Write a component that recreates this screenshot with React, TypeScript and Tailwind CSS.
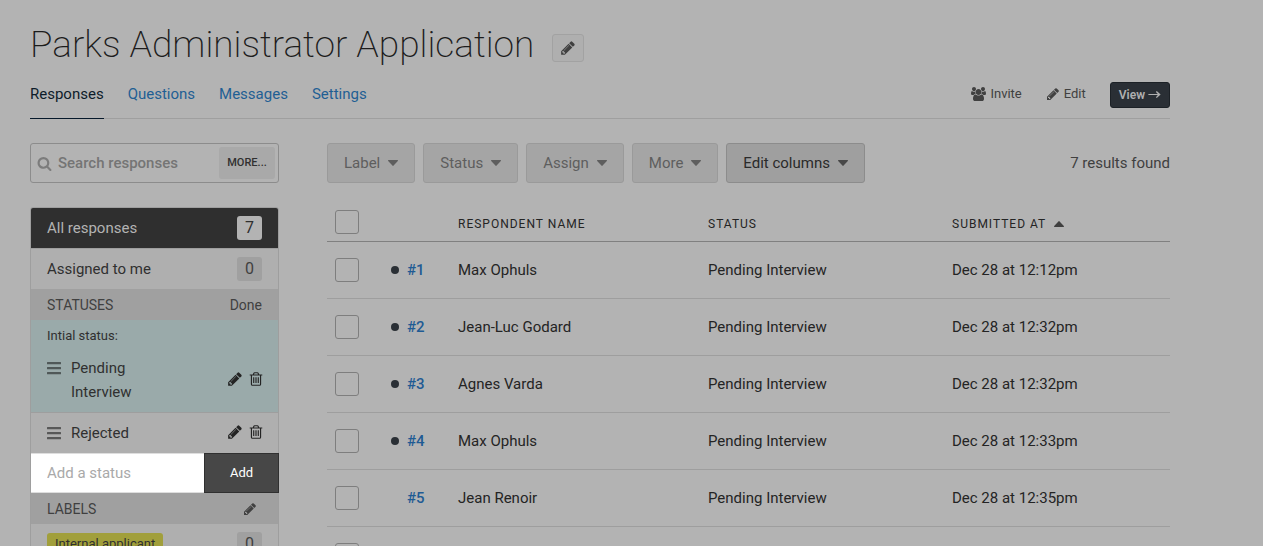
import React from "react";

const ICONS = {
  pencil: {
    box: "0 0 1792 1792",
    d: "M491 1536l91-91-235-235-91 91v107h128v128h107zm523-928q0-22-22-22-10 0-17 7l-542 542q-7 7-7 17 0 22 22 22 10 0 17-7l542-542q7-7 7-17zm-54-192l416 416-832 832h-416v-416zm683 96q0 53-37 90l-166 166-416-416 166-165q36-38 90-38 53 0 91 38l235 234q37 39 37 91z",
  },
  trash: {
    box: "0 0 1792 1792",
    d: "M704 736v576q0 14-9 23t-23 9h-64q-14 0-23-9t-9-23v-576q0-14 9-23t23-9h64q14 0 23 9t9 23zm256 0v576q0 14-9 23t-23 9h-64q-14 0-23-9t-9-23v-576q0-14 9-23t23-9h64q14 0 23 9t9 23zm256 0v576q0 14-9 23t-23 9h-64q-14 0-23-9t-9-23v-576q0-14 9-23t23-9h64q14 0 23 9t9 23zm128 724v-948h-896v948q0 22 7 40.5t14.5 27 10.5 8.5h832q3 0 10.5-8.5t14.5-27 7-40.5zm-672-1076h448l-48-117q-7-9-17-11h-317q-10 2-17 11zm928 32v64q0 14-9 23t-23 9h-96v948q0 83-47 143.5t-113 60.5h-832q-66 0-113-58.5t-47-141.5v-952h-96q-14 0-23-9t-9-23v-64q0-14 9-23t23-9h309l70-167q15-37 54-63t79-26h320q40 0 79 26t54 63l70 167h309q14 0 23 9t9 23z",
  },
  search: {
    box: "0 0 1792 1792",
    d: "M1216 832q0-185-131.5-316.5t-316.5-131.5-316.5 131.5-131.5 316.5 131.5 316.5 316.5 131.5 316.5-131.5 131.5-316.5zm512 832q0 52-38 90t-90 38q-54 0-90-38l-343-342q-179 124-399 124-143 0-273.5-55.5t-225-150-150-225-55.5-273.5 55.5-273.5 150-225 225-150 273.5-55.5 273.5 55.5 225 150 150 225 55.5 273.5q0 220-124 399l343 343q37 37 37 90z",
  },
  bars: {
    box: "0 0 16 16",
    d: "M1.500 2h13q.5 0 .5.5v1.200q0 .5-.5.5h-13q-.5 0-.5-.5v-1.200q0-.5.5-.5zM1.500 7h13q.5 0 .5.5v1.200q0 .5-.5.5h-13q-.5 0-.5-.5v-1.200q0-.5.5-.5zM1.500 12h13q.5 0 .5.5v1.200q0 .5-.5.5h-13q-.5 0-.5-.5v-1.200q0-.5.5-.5z",
  },
  users: {
    box: "0 0 1920 1792",
    d: "M593 896q-162 5-265 128h-134q-82 0-138-40.5t-56-118.5q0-353 124-353 6 0 43.5 21t97.5 42.5 119 21.5q67 0 133-23-5 37-5 66 0 139 81 256zm1071 637q0 120-73 189.5t-194 69.5h-874q-121 0-194-69.5t-73-189.5q0-53 3.5-103.5t14-109 26.5-108.5 43-97.5 62-81 85.5-53.5 111.5-20q10 0 43 21.5t73 48 107 48 135 21.5 135-21.5 107-48 73-48 43-21.5q61 0 111.5 20t85.5 53.5 62 81 43 97.5 26.5 108.5 14 109 3.5 103.5zm-1024-1277q0 106-75 181t-181 75-181-75-75-181 75-181 181-75 181 75 75 181zm704 384q0 159-112.5 271.5t-271.5 112.5-271.5-112.5-112.5-271.5 112.5-271.5 271.5-112.5 271.5 112.5 112.5 271.5zm576 225q0 78-56 118.5t-138 40.5h-134q-103-123-265-128 81-117 81-256 0-29-5-66 66 23 133 23 59 0 119-21.5t97.5-42.5 43.5-21q124 0 124 353zm-128-609q0 106-75 181t-181 75-181-75-75-181 75-181 181-75 181 75 75 181z",
  },
  caretDown: { box: "0 0 10 6", d: "M.5 0h9q.8.2.3 1L5.6 5.6Q5 6.200 4.400 5.600L.2 1Q-.3.2.5 0z" },
  caretUp: { box: "0 0 10 6", d: "M.5 6h9q.8-.2.3-1L5.600.4Q5-.2 4.400.4L.2 5Q-.3 5.800.5 6z" },
  arrow: { box: "0 0 14 8", d: "M0 3.400h10.800L8.600 1 9.600 0 14 4 9.600 8l-1-1 2.200-2.400H0z" },
};

function Icon({ name, className }: { name: keyof typeof ICONS; className: string }) {
  const icon = ICONS[name];
  return (
    <svg viewBox={icon.box} className={`block shrink-0 ${className}`} fill="currentColor" aria-hidden="true">
      <path d={icon.d} />
    </svg>
  );
}

const tabs = ["Responses", "Questions", "Messages", "Settings"];

const rows = [
  { id: 1, name: "Max Ophuls", at: "Dec 28 at 12:12pm", unread: true },
  { id: 2, name: "Jean-Luc Godard", at: "Dec 28 at 12:32pm", unread: true },
  { id: 3, name: "Agnes Varda", at: "Dec 28 at 12:32pm", unread: true },
  { id: 4, name: "Max Ophuls", at: "Dec 28 at 12:33pm", unread: true },
  { id: 5, name: "Jean Renoir", at: "Dec 28 at 12:35pm", unread: false },
];

function Header() {
  return (
    <header>
      <div className="flex items-center gap-[18px] pt-5">
        <h1 className="text-[37px] leading-[50px] font-extralight text-[#1c1c1c]">Parks Administrator Application</h1>
        <button
          aria-label="Edit title"
          className="mt-1.5 flex h-7 w-8 items-center justify-center rounded-[3px] border border-[#a2a2a2] bg-[#afafaf] text-[#404040]"
        >
          <Icon name="pencil" className="size-4" />
        </button>
      </div>
      <div className="flex items-stretch justify-between border-b border-[#9f9f9f]">
        <nav className="-mb-px flex gap-6 text-[15px] leading-6">
          {tabs.map((tab, i) => (
            <a
              key={tab}
              href={`#${tab.toLowerCase()}`}
              className={
                i === 0
                  ? "border-b border-[#06182a] pt-3 pb-3 text-[#0d1c2a]"
                  : "border-b border-transparent pt-3 pb-3 text-[#1f5f94]"
              }
            >
              {tab}
            </a>
          ))}
        </nav>
        <div className="flex items-center gap-6 text-[13px] text-[#404040]">
          <a href="#invite" className="flex items-center gap-1">
            <Icon name="users" className="h-[14px] w-[15px]" />
            Invite
          </a>
          <a href="#edit" className="flex items-center gap-1">
            <Icon name="pencil" className="size-[14px]" />
            Edit
          </a>
          <a
            href="#view"
            className="mt-px flex h-[26px] items-center gap-[3px] rounded-[3px] border border-[#1c2126] bg-[#2a2f35] px-2 text-xs font-semibold text-[#b0b0b0]"
          >
            View
            <Icon name="arrow" className="h-[7px] w-[13px]" />
          </a>
        </div>
      </div>
    </header>
  );
}

function Count({ value, active = false }: { value: number; active?: boolean }) {
  return (
    <span
      className={
        active
          ? "flex h-6 w-[25px] items-center justify-center rounded-[3px] bg-[#b3b3b3] text-base text-[#2f2f2f]"
          : "flex h-6 w-[25px] items-center justify-center rounded-[3px] bg-[#a0a0a0] text-base text-[#404040]"
      }
    >
      {value}
    </span>
  );
}

function RowActions({ label }: { label: string }) {
  return (
    <span className="-mr-[2px] mb-0.5 flex items-center gap-[5px] text-[#242424]">
      <button aria-label={`Edit ${label}`}>
        <Icon name="pencil" className="size-4" />
      </button>
      <button aria-label={`Delete ${label}`}>
        <Icon name="trash" className="size-4" />
      </button>
    </span>
  );
}

function Sidebar() {
  return (
    <aside className="w-[249px] shrink-0">
      <div className="flex h-10 items-center rounded-[3px] border border-[#8c8c8c] pr-[3px] pl-[6px]">
        <Icon name="search" className="size-[15px] text-[#7c7c7c]" />
        <input
          aria-label="Search responses"
          placeholder="Search responses"
          className="ml-[6px] w-0 grow bg-transparent text-[15px] font-medium text-[#333] outline-none placeholder:text-[#757575]"
        />
        <button className="h-8 w-14 rounded-[3px] bg-[#a9a9a9] text-[11px] font-medium text-[#303030]">MORE...</button>
      </div>

      <div className="mt-6 rounded-t-[3px] border border-[#9e9e9e] bg-[#afafaf] text-[15px] text-[#303030]">
        <a
          href="#all"
          className="flex h-10 items-center justify-between rounded-t-[2px] bg-[#2f2f2f] px-4 text-[#b3b3b3]"
        >
          All responses
          <Count value={7} active />
        </a>
        <a href="#assigned" className="flex h-[41px] items-center justify-between border-t border-[#9e9e9e] px-4">
          Assigned to me
          <Count value={0} />
        </a>
        <div className="flex h-[31px] items-center justify-between bg-[#a0a0a0] px-4 text-sm font-[450] text-[#404040]">
          <h2>STATUSES</h2>
          <button>Done</button>
        </div>
        <div className="border-b border-[#9e9e9e] bg-[#9aaaaa] px-4 pt-1 pb-2">
          <p className="text-[13px] leading-6 text-[#303030]">Intial status:</p>
          <div className="mt-2 flex items-center">
            <Icon name="bars" className="-ml-px mt-1 size-4 self-start text-[#505858]" />
            <span className="ml-[9px] w-24 leading-6">Pending Interview</span>
            <span className="ml-auto">
              <RowActions label="Pending Interview" />
            </span>
          </div>
        </div>
        <div className="flex h-10 items-center px-4">
          <Icon name="bars" className="-ml-px size-4 text-[#585858]" />
          <span className="ml-[9px]">Rejected</span>
          <span className="ml-auto">
            <RowActions label="Rejected" />
          </span>
        </div>
        <form className="-mr-px flex h-10" onSubmit={(e) => e.preventDefault()}>
          <input
            aria-label="Add a status"
            placeholder="Add a status"
            className="w-0 grow border-y border-[#dedede] bg-white px-4 pt-px text-[15px] text-[#333] outline-none placeholder:text-[#a9a9a9]"
          />
          <button className="w-[75px] border border-[#303030] bg-[#474747] text-[13px] text-white">Add</button>
        </form>
        <div className="flex h-[31px] items-center justify-between bg-[#a0a0a0] pr-[21px] pl-4 text-sm font-[450] text-[#404040]">
          <h2>LABELS</h2>
          <button aria-label="Edit labels">
            <Icon name="pencil" className="size-[14px]" />
          </button>
        </div>
        <div className="flex h-10 items-center justify-between px-4">
          <a
            href="#internal"
            className="rounded-[3px] bg-[#a19f3b] px-2 text-[13px] leading-[22px] text-[#303030]"
          >
            Internal applicant
          </a>
          <Count value={0} />
        </div>
      </div>
    </aside>
  );
}

function Toolbar() {
  return (
    <div className="flex items-center gap-2 text-[15px] font-[450]">
      {["Label", "Status", "Assign", "More"].map((label) => (
        <button
          key={label}
          disabled
          className="flex h-10 items-center gap-2 rounded-[3px] border border-[#9a9a9a] bg-[#a5a5a5] px-4 text-[#5e5e5e]"
        >
          {label}
          <Icon name="caretDown" className="h-[6px] w-[10px]" />
        </button>
      ))}
      <button className="flex h-10 items-center gap-2 rounded-[3px] border border-[#8c8c8c] bg-[#9f9f9f] px-4 text-[#2a2a2a]">
        Edit columns
        <Icon name="caretDown" className="h-[6px] w-[10px] text-[#484848]" />
      </button>
      <span className="ml-auto text-[#404040]">7 results found</span>
    </div>
  );
}

function Check({ label }: { label: string }) {
  return (
    <input
      type="checkbox"
      aria-label={label}
      className="block size-6 appearance-none rounded-[3px] border border-[#7e7e7e] checked:bg-[#2f2f2f]"
    />
  );
}

function Responses() {
  return (
    <table className="mt-[27px] w-full table-fixed border-collapse text-left text-[15px] font-[450] text-[#242424]">
      <thead>
        <tr className="border-b border-[#808080] align-top text-xs tracking-[1px]">
          <th className="w-16 pb-[7px] pl-2">
            <Check label="Select all" />
          </th>
          <td className="w-[67px]" />
          <th className="w-[250px] pt-[6px] font-[450]">RESPONDENT NAME</th>
          <th className="w-[244px] pt-[6px] font-[450]">STATUS</th>
          <th className="pt-[6px] font-[450]">
            <span className="flex items-center gap-2">
              SUBMITTED AT
              <Icon name="caretUp" className="h-[6px] w-[10px] text-[#404040]" />
            </span>
          </th>
        </tr>
      </thead>
      <tbody>
        {rows.map((row) => (
          <tr key={row.id} className="h-[57px] border-b border-[#9e9e9e]">
            <td className="pl-2">
              <Check label={`Select response ${row.id}`} />
            </td>
            <td>
              <span className="flex items-center gap-2">
                <span className={row.unread ? "size-2 rounded-full bg-[#2a2f35]" : "size-2"} />
                <a href={`#response-${row.id}`} className="font-medium text-[#1f5b94]">
                  #{row.id}
                </a>
              </span>
            </td>
            <td>{row.name}</td>
            <td>Pending Interview</td>
            <td>{row.at}</td>
          </tr>
        ))}
        <tr className="h-[57px]">
          <td className="pl-2">
            <Check label="Select response 6" />
          </td>
          <td colSpan={4} />
        </tr>
      </tbody>
    </table>
  );
}

export default function App() {
  return (
    <div className="h-screen overflow-hidden bg-[#b3b3b3] font-['Roboto',sans-serif]">
      <div className="max-w-[1200px] px-[30px]">
        <Header />
        <div className="mt-6 flex gap-12">
          <Sidebar />
          <main className="min-w-0 grow">
            <Toolbar />
            <Responses />
          </main>
        </div>
      </div>
    </div>
  );
}
